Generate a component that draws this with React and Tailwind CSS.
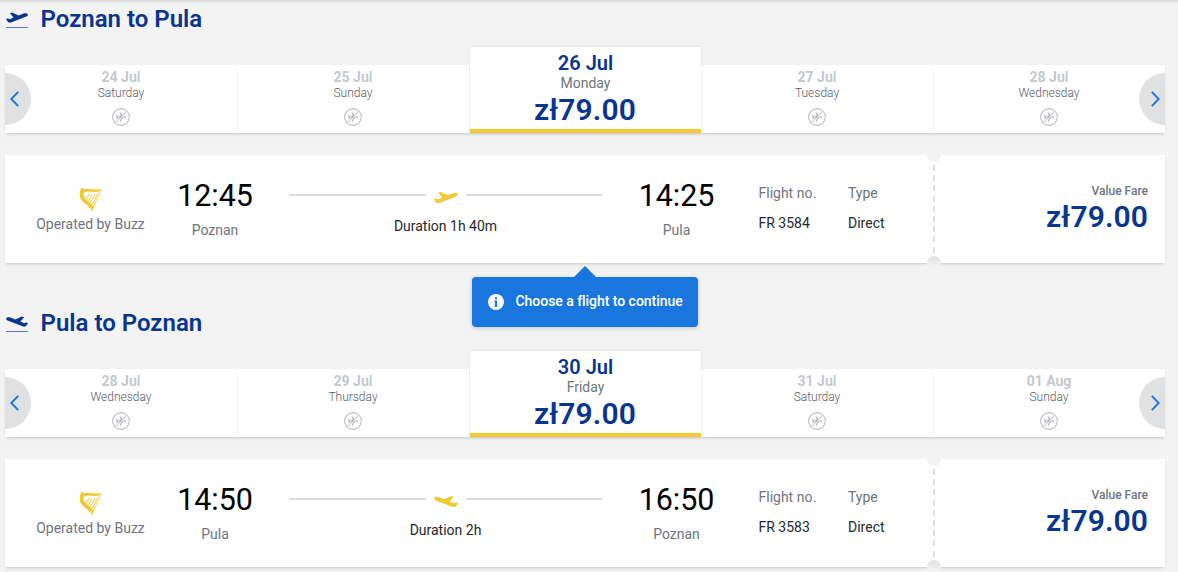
const trips = [
  {
    id: "outbound",
    title: "Poznan to Pula",
    landing: false,
    days: [
      { date: "24 Jul", weekday: "Saturday" },
      { date: "25 Jul", weekday: "Sunday" },
      { date: "26 Jul", weekday: "Monday", price: "zł79.00" },
      { date: "27 Jul", weekday: "Tuesday" },
      { date: "28 Jul", weekday: "Wednesday" },
    ],
    flight: {
      departure: "12:45",
      from: "Poznan",
      arrival: "14:25",
      to: "Pula",
      duration: "Duration 1h 40m",
      number: "FR 3584",
      type: "Direct",
      price: "zł79.00",
    },
  },
  {
    id: "inbound",
    title: "Pula to Poznan",
    landing: true,
    days: [
      { date: "28 Jul", weekday: "Wednesday" },
      { date: "29 Jul", weekday: "Thursday" },
      { date: "30 Jul", weekday: "Friday", price: "zł79.00" },
      { date: "31 Jul", weekday: "Saturday" },
      { date: "01 Aug", weekday: "Sunday" },
    ],
    flight: {
      departure: "14:50",
      from: "Pula",
      arrival: "16:50",
      to: "Poznan",
      duration: "Duration 2h",
      number: "FR 3583",
      type: "Direct",
      price: "zł79.00",
    },
  },
];

const Plane = ({ landing, className }) => (
  <svg
    viewBox="0 0 24 11"
    fill="currentColor"
    className={`${className} ${landing ? "-scale-x-100" : ""}`}
  >
    <path d="M0 7.2 1.5 6.6 4.2 7.3 8.3 5.6 4.2 .8 6.6 0 13.9 3.3 19.2 1.2C21.2.5 23.2.8 23.8 2.1 24.2 3.3 23 4.2 21.5 4.8L6 10.8C4.2 11.3 2.6 11.2 1.9 10.2Z" />
  </svg>
);

const Chevron = ({ flipped }) => (
  <svg
    viewBox="0 0 9 16"
    fill="none"
    stroke="currentColor"
    strokeWidth="1.9"
    className={`h-4 w-[9px] ${flipped ? "-scale-x-100" : ""}`}
  >
    <path d="M8.2.9 1.3 8l6.9 7.1" />
  </svg>
);

const NoFlights = () => (
  <svg viewBox="0 0 18 18" className="mt-[7px] h-[18px] w-[18px] text-[#bbbec3]">
    <circle cx="9" cy="9" r="8.4" fill="none" stroke="currentColor" strokeWidth="1.1" />
    <path
      fill="currentColor"
      d="M4 6.7h.9L6.1 8.3h2.4L7.6 4.2h1l2.4 4.1h2.2c.7 0 1.2.3 1.2.7s-.5.7-1.2.7H11l-2.4 4.1h-1l.9-4.1H6.1l-1.2 1.6H4L4.6 9Z"
    />
    <path d="M4 15.6 15.2 3.8" stroke="#fff" strokeWidth="0.8" />
    <path d="M3.1 14.8 14.9 3" stroke="currentColor" strokeWidth="1" />
  </svg>
);

const Harp = () => (
  <svg viewBox="0 0 24 25" fill="none" className="h-[25px] w-6 text-[#f1c933]">
    <path
      fill="currentColor"
      d="M2.2 1.2C3.6.5 5 1.3 5.2 2.3 9 .8 12.7 2.4 16.1 2.6 19 2.8 21.4 2.2 24 2.9 21 3.6 18.8 5.3 15.1 5.1 11.5 4.8 8.8 3.7 6 5 4.4 5.9 4.3 7.2 4.9 9 6.2 13 10.9 14.6 13.2 18.4L14.2 19 13.6 25C12 19.2 4.5 17.3 1.5 11.8.5 9.8 1.1 8.1 1 6.8.9 5.5 0 4.4 1.3 3.8Z"
    />
    <path
      stroke="currentColor"
      strokeWidth="1"
      d="M10.1 7 7.5 11.9M12.9 7.5 9.5 14M15.6 7.5 11.3 15.9M18.3 7 12.9 18.1"
    />
    <path stroke="currentColor" strokeWidth="0.9" d="M21.4 4.6 13.6 21.6" />
  </svg>
);

const DayItem = ({ day }) => {
  if (day.price) {
    return (
      <div className="-mt-[18px] mr-px flex h-[86px] w-[231px] shrink-0 flex-col items-center border-b-4 border-[#f1c933] bg-white pt-1 shadow-[0_0_3px_rgba(0,0,0,0.1)]">
        <span className="text-xl leading-6 font-semibold text-[#073590]">{day.date}</span>
        <span className="text-sm leading-4 text-[#6f7480]">{day.weekday}</span>
        <span className="mr-px text-[30px] leading-[38px] font-semibold tracking-[0.1px] text-[#073590]">
          {day.price}
        </span>
      </div>
    );
  }

  return (
    <div className="flex h-[68px] w-[232px] flex-col items-center border-r border-[#f5f5f6] pt-1 pr-px last:w-[231px] last:border-r-0">
      <span className="text-sm leading-4 font-bold text-[#c5c8cc]">{day.date}</span>
      <span className="text-xs leading-4 font-light text-[#565b66]">{day.weekday}</span>
      <NoFlights />
    </div>
  );
};

const DateCarousel = ({ days }) => (
  <div className="relative mt-[28px] h-[68px] bg-white pl-px shadow-[0_2px_3px_-1px_rgba(0,0,0,0.18)]">
    <div className="flex">
      {days.map((day) => (
        <DayItem key={day.date} day={day} />
      ))}
    </div>
    <button
      type="button"
      aria-label="Previous dates"
      className="absolute top-2 left-0 flex h-[52px] w-[26px] items-center rounded-r-full bg-[#e0e1e3] pl-[5px] text-[#1976de]"
    >
      <Chevron />
    </button>
    <button
      type="button"
      aria-label="Next dates"
      className="absolute top-2 right-0 flex h-[52px] w-[26px] items-center justify-end rounded-l-full bg-[#e0e1e3] pr-[5px] text-[#1976de]"
    >
      <Chevron flipped />
    </button>
  </div>
);

const TimeBlock = ({ time, city }) => (
  <div className="flex w-[94px] flex-col items-center pt-[23px]">
    <span className="text-[30.5px] leading-9 font-[370] tracking-[-0.1px] text-black">{time}</span>
    <span className="mt-[7px] text-sm leading-[18px] text-[#6f7480]">{city}</span>
  </div>
);

const FlightCard = ({ flight, landing }) => (
  <div className="relative mt-[22px] flex h-[108px] bg-white shadow-[0_2px_3px_-1px_rgba(0,0,0,0.18)]">
    <div className="flex w-[171px] flex-col items-center pt-8">
      <Harp />
      <span className="mt-[3px] text-sm leading-[18px] text-[#6f7480]">Operated by Buzz</span>
    </div>

    <div className="-ml-2">
      <TimeBlock time={flight.departure} city={flight.from} />
    </div>

    <div className="ml-[27px] w-[313px]">
      <div className="flex h-20 flex-col items-center pt-[34px]">
        <div className="flex h-[18px] w-full justify-between">
          <div className="mt-[5px] h-0.5 w-[137px] bg-[#dedede]" />
          <Plane landing={landing} className="mt-[3px] h-[11px] w-6 text-[#f1c933]" />
          <div className="mt-[5px] h-0.5 w-[136px] bg-[#dedede]" />
        </div>
        <span className="mt-[10px] text-sm leading-[18px] text-[#26282c]">{flight.duration}</span>
      </div>
    </div>

    <div className="ml-[27.5px]">
      <TimeBlock time={flight.arrival} city={flight.to} />
    </div>

    <div className="ml-[35px] flex w-[89.5px] flex-col gap-3 pt-[29px] text-sm leading-[18px]">
      <span className="text-[#6f7480]">Flight no.</span>
      <span className="text-[#26282c]">{flight.number}</span>
    </div>
    <div className="flex w-[80px] flex-col gap-3 pt-[29px] text-sm leading-[18px]">
      <span className="text-[#6f7480]">Type</span>
      <span className="text-[#26282c]">{flight.type}</span>
    </div>

    {/* perforated edge between the flight and its fare */}
    <div className="absolute top-0 left-[922px] h-[111px] w-[14px] overflow-hidden">
      <div className="absolute -top-[7px] h-[14px] w-[14px] rounded-full bg-[#f3f3f3]" />
      <div className="absolute top-[10px] left-[6px] h-[90px] w-0.5 bg-[repeating-linear-gradient(to_bottom,#dedede_0px,#dedede_6px,transparent_6px,transparent_10.2px)]" />
      <div className="absolute bottom-0 h-[10px] w-[14px] rounded-t-full bg-linear-to-b from-[#e0e0e0] to-[#f3f3f3]" />
    </div>

    <div className="ml-auto flex flex-col items-end pt-7 pr-[17px]">
      <span className="text-xs leading-4 font-medium text-[#6f7480]">Value Fare</span>
      <span className="text-[30px] leading-9 font-semibold tracking-[0.1px] text-[#073590]">
        {flight.price}
      </span>
    </div>
  </div>
);

const Trip = ({ trip }) => (
  <section className="h-[304px] w-[1160px]">
    <div className="flex h-[37px] items-center gap-[12.5px]">
      <div className="ml-px flex w-[22px] flex-col gap-[4px] pt-[3px] text-[#073590]">
        <Plane landing={trip.landing} className="h-[11px] w-[22px]" />
        <div className="h-px bg-[#5a79b5]" />
      </div>
      <h2 className="text-2xl leading-8 font-semibold text-[#073590]">{trip.title}</h2>
    </div>
    <DateCarousel days={trip.days} />
    <FlightCard flight={trip.flight} landing={trip.landing} />
  </section>
);

const App = () => (
  <main className="relative h-[572px] w-[1178px] overflow-hidden bg-[#f3f3f3] pl-[5px] font-['Roboto',sans-serif] shadow-[inset_0_3px_2px_-1px_rgba(0,0,0,0.09)]">
    {trips.map((trip) => (
      <Trip key={trip.id} trip={trip} />
    ))}

    <div className="absolute top-[277px] left-[472px] flex h-[50px] w-[226px] items-center rounded bg-[#1976de] pl-4 shadow-[0_1px_4px_rgba(0,0,0,0.2)]">
      <div className="absolute -top-[11px] left-[102px] h-[11px] w-[22px] bg-[#1976de] [clip-path:polygon(50%_0,100%_100%,0_100%)]" />
      <svg viewBox="0 0 16 16" className="h-4 w-4">
        <circle cx="8" cy="8" r="8" fill="#fff" />
        <path fill="#1976de" d="M7 3.2h2v2H7zM6.4 6.5H9v5.2h.7v1H6.3v-1H7V7.5h-.6z" />
      </svg>
      <span className="mb-0.5 ml-[11.5px] text-sm font-medium tracking-[-0.04px] text-white">
        Choose a flight to continue
      </span>
    </div>
  </main>
);

export default App;
